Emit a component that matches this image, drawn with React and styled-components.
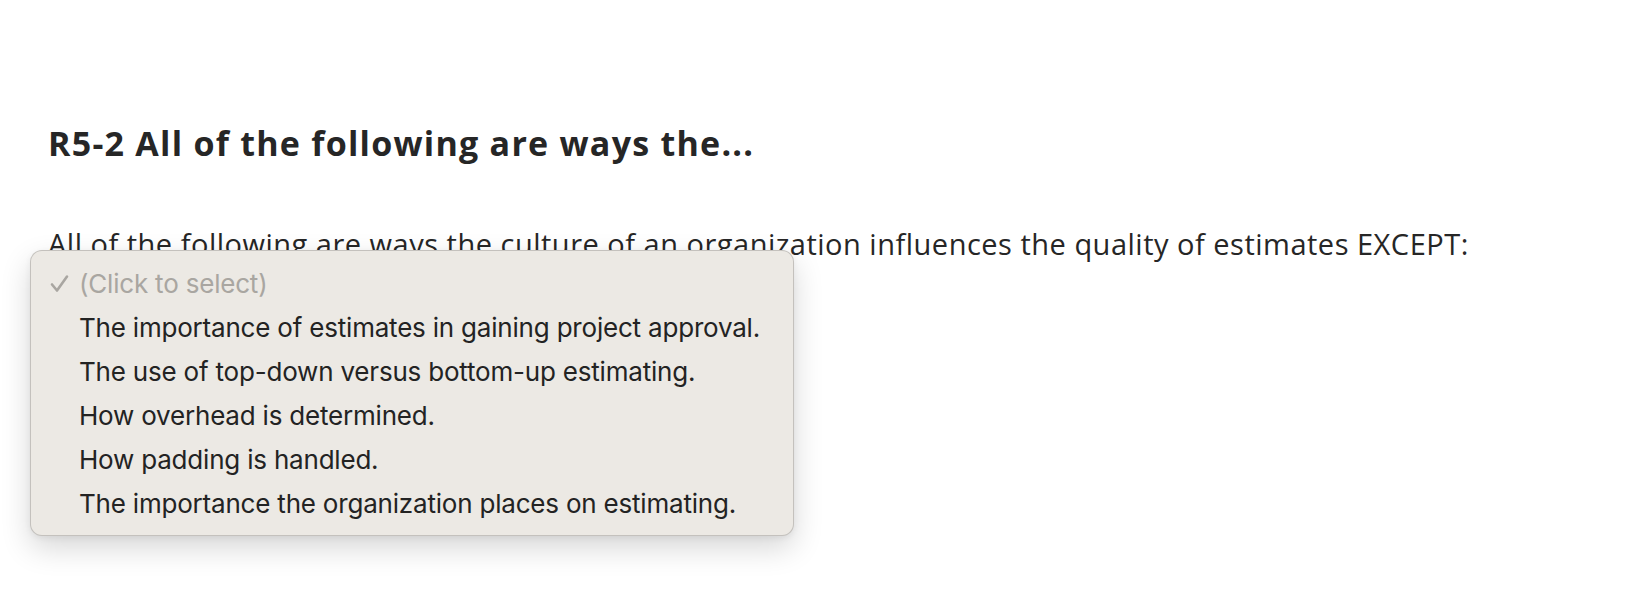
import React from 'react';
import styled, { createGlobalStyle } from 'styled-components';

const GlobalStyle = createGlobalStyle`
  html, body {
    margin: 0;
    padding: 0;
    background: #ffffff;
  }
  body {
    font-family: "Open Sans", Lato, sans-serif;
    color: #262626;
  }
`;

const Page = styled.main`
  padding: 123px 48px 0;
  min-height: 596px;
  box-sizing: border-box;
`;

const Title = styled.h2`
  margin: 0;
  font-family: "Open Sans", Lato, sans-serif;
  font-size: 34px;
  line-height: 41px;
  font-weight: 700;
  letter-spacing: 1.25px;
  color: #262626;
`;

const Question = styled.section`
  position: relative;
  margin-top: 62px;
`;

const Prompt = styled.p`
  margin: 0;
  font-family: "Open Sans", Lato, sans-serif;
  font-size: 29px;
  line-height: 35px;
  font-weight: 400;
  letter-spacing: 0.5px;
  color: #262626;
`;

const Menu = styled.ul`
  position: absolute;
  top: 24px;
  left: -18px;
  width: 764px;
  box-sizing: border-box;
  margin: 0;
  padding: 10px 0;
  list-style: none;
  background: #ece9e4;
  border: 1px solid rgba(0, 0, 0, 0.17);
  border-radius: 12px;
  box-shadow: 0 12px 30px rgba(0, 0, 0, 0.16), 0 2px 6px rgba(0, 0, 0, 0.06);
`;

const Option = styled.li`
  display: flex;
  align-items: center;
  height: 44px;
  padding-left: 19px;
  font-family: Inter, "Noto Sans", sans-serif;
  font-size: 26px;
  letter-spacing: -0.2px;
  color: ${({ $placeholder }) => ($placeholder ? '#a9a6a1' : '#232323')};
`;

const Check = styled.span`
  display: inline-flex;
  width: 29px;
  color: #a9a6a1;
`;

const options = [
  'The importance of estimates in gaining project approval.',
  'The use of top-down versus bottom-up estimating.',
  'How overhead is determined.',
  'How padding is handled.',
  'The importance the organization places on estimating.',
];

const CheckIcon = () => (
  <svg width="19" height="19" viewBox="0 0 19 19" fill="none">
    <path d="M2 10.5 L7 16.5 L17 2.5" stroke="currentColor" strokeWidth="2.6" strokeLinecap="round" strokeLinejoin="round" />
  </svg>
);

const App = () => (
  <>
    <GlobalStyle />
    <Page>
      <Title>R5-2 All of the following are ways the...</Title>
      <Question>
        <Prompt>
          All of the following are ways the culture of an organization influences the quality of estimates EXCEPT:
        </Prompt>
        <Menu>
          <Option $placeholder>
            <Check><CheckIcon /></Check>
            (Click to select)
          </Option>
          {options.map((text) => (
            <Option key={text}>
              <Check />
              {text}
            </Option>
          ))}
        </Menu>
      </Question>
    </Page>
  </>
);

export default App;
